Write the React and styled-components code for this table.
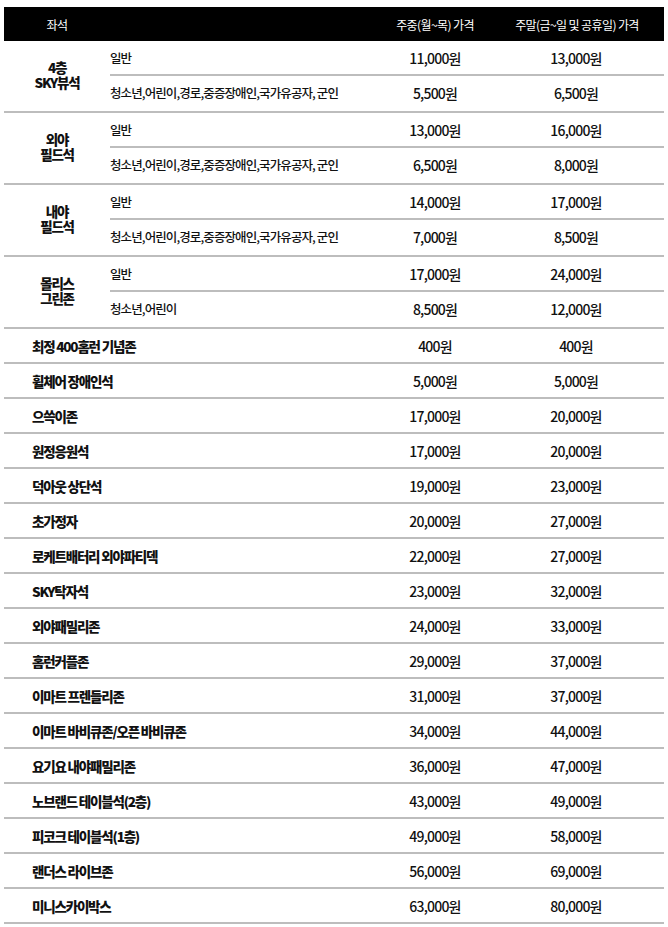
import React from "react";
import styled, { createGlobalStyle } from "styled-components";

const groups = [
  {
    name: ["4층", "SKY뷰석"],
    rows: [
      { type: "일반", weekday: "11,000원", weekend: "13,000원" },
      { type: "청소년,어린이,경로,중증장애인,국가유공자, 군인", weekday: "5,500원", weekend: "6,500원" },
    ],
  },
  {
    name: ["외야", "필드석"],
    rows: [
      { type: "일반", weekday: "13,000원", weekend: "16,000원" },
      { type: "청소년,어린이,경로,중증장애인,국가유공자, 군인", weekday: "6,500원", weekend: "8,000원" },
    ],
  },
  {
    name: ["내야", "필드석"],
    rows: [
      { type: "일반", weekday: "14,000원", weekend: "17,000원" },
      { type: "청소년,어린이,경로,중증장애인,국가유공자, 군인", weekday: "7,000원", weekend: "8,500원" },
    ],
  },
  {
    name: ["몰리스", "그린존"],
    rows: [
      { type: "일반", weekday: "17,000원", weekend: "24,000원" },
      { type: "청소년,어린이", weekday: "8,500원", weekend: "12,000원" },
    ],
  },
];

const singles = [
  ["최정 400홈런 기념존", "400원", "400원"],
  ["휠체어 장애인석", "5,000원", "5,000원"],
  ["으쓱이존", "17,000원", "20,000원"],
  ["원정응원석", "17,000원", "20,000원"],
  ["덕아웃 상단석", "19,000원", "23,000원"],
  ["초가정자", "20,000원", "27,000원"],
  ["로케트배터리 외야파티덱", "22,000원", "27,000원"],
  ["SKY탁자석", "23,000원", "32,000원"],
  ["외야패밀리존", "24,000원", "33,000원"],
  ["홈런커플존", "29,000원", "37,000원"],
  ["이마트 프렌들리존", "31,000원", "37,000원"],
  ["이마트 바비큐존/오픈 바비큐존", "34,000원", "44,000원"],
  ["요기요 내야패밀리존", "36,000원", "47,000원"],
  ["노브랜드 테이블석(2층)", "43,000원", "49,000원"],
  ["피코크 테이블석(1층)", "49,000원", "58,000원"],
  ["랜더스 라이브존", "56,000원", "69,000원"],
  ["미니스카이박스", "63,000원", "80,000원"],
];

export default function App() {
  return (
    <>
      <GlobalStyle />
      <Page>
        <HeaderRow>
          <HeadCell>좌석</HeadCell>
          <HeadCell />
          <HeadCell>주중(월~목) 가격</HeadCell>
          <HeadCell $weekend>주말(금~일 및 공휴일) 가격</HeadCell>
        </HeaderRow>

        {groups.map((group) => (
          <Group key={group.name.join("")}>
            <GroupName>
              <NameLine>{group.name[0]}</NameLine>
              <NameLine>{group.name[1]}</NameLine>
            </GroupName>
            <SubRows>
              {group.rows.map((row, i) => (
                <SubRow key={row.type} $divider={i === 0}>
                  <SubType>{row.type}</SubType>
                  <Price>{row.weekday}</Price>
                  <Price $weekend>{row.weekend}</Price>
                </SubRow>
              ))}
            </SubRows>
          </Group>
        ))}

        {singles.map(([name, weekday, weekend]) => (
          <SingleRow key={name}>
            <SeatName>{name}</SeatName>
            <Price>{weekday}</Price>
            <Price $weekend>{weekend}</Price>
          </SingleRow>
        ))}
      </Page>
    </>
  );
}

const GlobalStyle = createGlobalStyle`
  body {
    margin: 0;
    background: #ffffff;
    font-family: "Noto Sans CJK KR", "Noto Sans", sans-serif;
    color: #111111;
  }
`;

const Page = styled.div`
  width: 660px;
  padding: 7px 4px 0;
`;

const HeaderRow = styled.div`
  display: grid;
  grid-template-columns: 106px 260px 130px 164px;
  align-items: center;
  height: 34px;
  background: #000000;
`;

const HeadCell = styled.div`
  color: #ffffff;
  font-size: 12px;
  letter-spacing: -0.6px;
  text-align: center;
  padding-right: ${(p) => (p.$weekend ? "10px" : "0")};
`;

const Group = styled.div`
  display: grid;
  grid-template-columns: 106px 1fr;
  border-bottom: 2px solid #bdbdbd;
`;

const GroupName = styled.div`
  display: flex;
  flex-direction: column;
  align-items: center;
  justify-content: center;
  font-size: 13.5px;
  font-weight: 900;
  letter-spacing: -1.2px;
  padding-bottom: 2px;
`;

const NameLine = styled.span`
  display: block;
  line-height: 15px;
`;

const SubRows = styled.div`
  display: flex;
  flex-direction: column;
`;

const SubRow = styled.div`
  display: grid;
  grid-template-columns: 260px 130px 164px;
  align-items: center;
  height: 35px;
  box-sizing: border-box;
  border-bottom: ${(p) => (p.$divider ? "2px solid #bdbdbd" : "none")};
  padding-bottom: ${(p) => (p.$divider ? "0" : "2px")};
`;

const SubType = styled.div`
  font-size: 12.5px;
  font-weight: 500;
  letter-spacing: -0.9px;
  white-space: nowrap;
`;

const SingleRow = styled.div`
  display: grid;
  grid-template-columns: 366px 130px 164px;
  align-items: center;
  height: 35px;
  box-sizing: border-box;
  border-bottom: 2px solid #bdbdbd;
`;

const SeatName = styled.div`
  padding-left: 28px;
  font-size: 13.5px;
  font-weight: 900;
  letter-spacing: -1.2px;
  white-space: nowrap;
`;

const Price = styled.div`
  text-align: center;
  font-size: 14px;
  font-weight: 500;
  letter-spacing: -0.8px;
  padding-right: ${(p) => (p.$weekend ? "12px" : "0")};
`;
